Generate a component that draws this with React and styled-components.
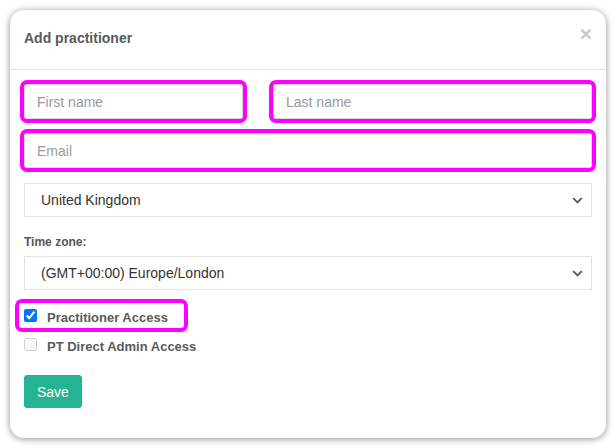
import React from "react";
import styled, { createGlobalStyle } from "styled-components";

const GlobalStyle = createGlobalStyle`
  * { box-sizing: border-box; }
  body {
    margin: 0;
    background: #ffffff;
    font-family: "Liberation Sans", Arial, sans-serif;
  }
`;

const Page = styled.div`
  width: 616px;
  height: 448px;
  padding: 10px;
`;

const Modal = styled.div`
  width: 596px;
  height: 428px;
  background: #fff;
  border-radius: 14px;
  box-shadow: 0 1px 7px rgba(0, 0, 0, 0.45);
  display: flex;
  flex-direction: column;
`;

const Header = styled.div`
  height: 60px;
  padding: 19px 14px 0 14px;
  border-bottom: 1px solid #e5e5e5;
  display: flex;
  justify-content: space-between;
  align-items: flex-start;
`;

const Title = styled.h4`
  margin: 0;
  font-size: 14px;
  line-height: 18px;
  font-weight: bold;
  color: #5a5a5a;
`;

const Close = styled.button`
  border: 0;
  background: none;
  padding: 0;
  margin: -6px 0 0 0;
  font-family: "Liberation Sans", Arial, sans-serif;
  font-size: 21px;
  font-weight: bold;
  line-height: 21px;
  color: #c8c8c8;
  cursor: pointer;
`;

const Body = styled.div`
  padding: 14px 14px 0 14px;
  display: flex;
  flex-direction: column;
  align-items: flex-start;
`;

const Row = styled.div`
  display: grid;
  grid-template-columns: 219px 1fr;
  column-gap: 30px;
  width: 100%;
`;

const Highlight = styled.div`
  outline: 4px solid #ff00ff;
  border-radius: 3px;
  width: 100%;
  margin-top: ${(p) => p.$top || 0}px;
`;

const Input = styled.input`
  display: block;
  width: 100%;
  height: 35px;
  padding: 0 12px;
  border: 1px solid #dcdcdc;
  border-radius: 0;
  font-family: "Liberation Sans", Arial, sans-serif;
  font-size: 14px;
  color: #333;
  box-shadow: inset 0 1px 1px rgba(0, 0, 0, 0.04);
  &::placeholder { color: #999; }
`;

const SelectWrap = styled.div`
  position: relative;
  width: 100%;
  margin-top: ${(p) => p.$top || 0}px;
`;

const Select = styled.select`
  appearance: none;
  display: block;
  width: 100%;
  height: 34px;
  padding: 0 30px 0 16px;
  border: 1px solid #e3e3e3;
  border-radius: 0;
  background: #fff;
  font-family: "Liberation Sans", Arial, sans-serif;
  font-size: 14px;
  color: #333;
`;

const Chevron = styled.svg`
  position: absolute;
  right: 9px;
  top: 14px;
  pointer-events: none;
`;

const Label = styled.label`
  display: block;
  margin: 17px 0 6px 0;
  font-size: 12px;
  line-height: 16px;
  font-weight: bold;
  color: #555;
`;

const CheckRow = styled.label`
  display: inline-flex;
  align-items: center;
  height: 25px;
  margin: ${(p) => p.$top || 0}px 0 0 -5px;
  padding: 0 16px 0 5px;
  font-size: 13px;
  font-weight: bold;
  color: #5a5a5a;
  ${(p) => p.$hl && "outline: 4px solid #ff00ff; border-radius: 3px;"}
`;

const CheckText = styled.span`
  padding-top: 3px;
`;

const Check = styled.input`
  width: 13px;
  height: 13px;
  margin: 0 10px 0 0;
  accent-color: #0075ff;
`;

const SaveButton = styled.button`
  margin-top: 18px;
  height: 33px;
  padding: 0 12px;
  border: 1px solid #26b393;
  border-radius: 3px;
  background: #26b393;
  color: #fff;
  font-family: "Liberation Sans", Arial, sans-serif;
  font-size: 14px;
  cursor: pointer;
`;

const ChevronIcon = () => (
  <Chevron width="11" height="7" viewBox="0 0 11 7">
    <polyline
      points="1.2,1.2 5.5,5.5 9.8,1.2"
      fill="none"
      stroke="#5a5a5a"
      strokeWidth="1.8"
    />
  </Chevron>
);

const App = () => {
  return (
    <>
      <GlobalStyle />
      <Page>
        <Modal>
          <Header>
            <Title>Add practitioner</Title>
            <Close type="button">×</Close>
          </Header>
          <Body>
            <Row>
              <Highlight>
                <Input type="text" placeholder="First name" />
              </Highlight>
              <Highlight>
                <Input type="text" placeholder="Last name" />
              </Highlight>
            </Row>
            <Highlight $top={14}>
              <Input type="email" placeholder="Email" />
            </Highlight>
            <SelectWrap $top={15}>
              <Select defaultValue="uk">
                <option value="uk">United Kingdom</option>
              </Select>
              <ChevronIcon />
            </SelectWrap>
            <Label>Time zone:</Label>
            <SelectWrap>
              <Select defaultValue="london">
                <option value="london">(GMT+00:00) Europe/London</option>
              </Select>
              <ChevronIcon />
            </SelectWrap>
            <CheckRow $hl $top={13}>
              <Check type="checkbox" defaultChecked />
              <CheckText>Practitioner Access</CheckText>
            </CheckRow>
            <CheckRow $top={4}>
              <Check type="checkbox" disabled />
              <CheckText>PT Direct Admin Access</CheckText>
            </CheckRow>
            <SaveButton type="button">Save</SaveButton>
          </Body>
        </Modal>
      </Page>
    </>
  );
};

export default App;
